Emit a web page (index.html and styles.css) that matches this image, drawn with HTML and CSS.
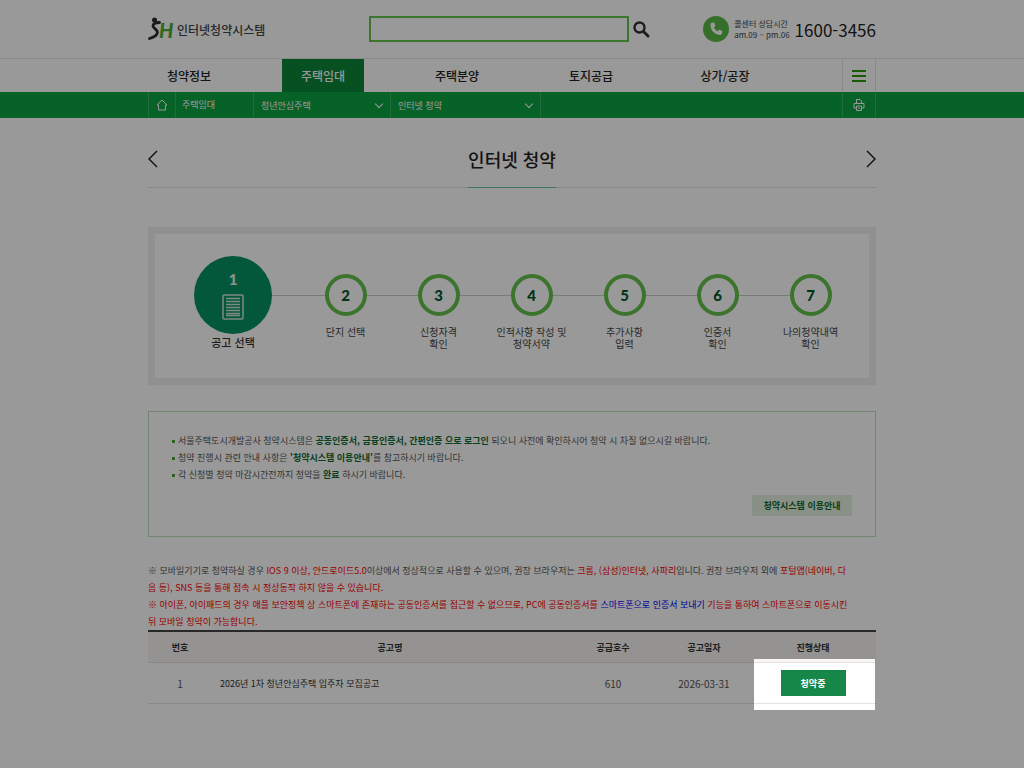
FILE: index.html
```html
<!DOCTYPE html>
<html lang="ko">
<head>
  <meta charset="UTF-8">
  <meta name="viewport" content="width=device-width, initial-scale=1.0">
  <title>인터넷 청약 | 인터넷청약시스템</title>
  <link rel="stylesheet" href="styles.css">
</head>
<body>

  <header class="header">
    <div class="container header-inner">
      <a href="#" class="logo">
        <svg class="logo-mark" width="26" height="24" viewBox="0 0 26 24" aria-hidden="true">
          <circle cx="6.500" cy="3" r="2.500" fill="#2c2c2c"/>
          <path d="M11.500 5.500C7 5.500 5 7 5 9C5 11.500 9.600 12 9.400 15.500C9 19 5 20.500 1.500 21.500" fill="none" stroke="#2c2c2c" stroke-width="2.800" stroke-linecap="round"/>
          <text x="11" y="21" class="logo-h">H</text>
        </svg>
        <span class="logo-text">인터넷청약시스템</span>
      </a>
      <form class="search">
        <input type="text" id="search" aria-label="검색어">
        <button type="submit" aria-label="검색">
          <svg width="17" height="17" viewBox="0 0 17 17" aria-hidden="true">
            <circle cx="6.500" cy="6.500" r="5" fill="none" stroke="#333" stroke-width="2.400"/>
            <path d="M10.500 10.500L15 15" stroke="#333" stroke-width="3" stroke-linecap="round"/>
          </svg>
        </button>
      </form>
      <div class="call">
        <svg width="26" height="26" viewBox="0 0 26 26" aria-hidden="true">
          <circle cx="13" cy="13" r="13" fill="#5bb947"/>
          <path d="M8.600 6.800L10.500 6.400Q11.100 6.400 11.400 7L12.300 9.300Q12.500 9.900 12 10.400L10.900 11.400Q12 14 14.600 15.300L15.800 14Q16.300 13.500 16.900 13.800L18.900 14.900Q19.500 15.300 19.300 15.900L18.800 17.700Q18.500 18.800 17.400 18.900Q13.500 19.200 10.300 15.900Q7.200 12.500 7.500 8Q7.600 7 8.600 6.800Z" fill="#fff"/>
        </svg>
        <p class="call-time">콜센터 상담시간<br>am.09 ~ pm.06</p>
        <strong class="call-number">1600-3456</strong>
      </div>
    </div>
  </header>

  <nav class="gnb">
    <div class="container gnb-inner">
      <ul class="gnb-list">
        <li><a href="#">청약정보</a></li>
        <li><a href="#" class="active">주택임대</a></li>
        <li><a href="#">주택분양</a></li>
        <li><a href="#">토지공급</a></li>
        <li><a href="#">상가/공장</a></li>
      </ul>
      <button type="button" class="menu-btn" aria-label="전체메뉴">
        <span></span><span></span><span></span>
      </button>
    </div>
  </nav>

  <div class="lnb">
    <div class="container lnb-inner">
      <a href="#" class="lnb-home" aria-label="홈">
        <svg width="12" height="12" viewBox="0 0 12 12" fill="none" stroke="#fff" aria-hidden="true">
          <path d="M1 6L6 1L11 6H9.500V11H2.500V6Z"/>
        </svg>
      </a>
      <span class="lnb-text">주택임대</span>
      <div class="lnb-select second">
        <select aria-label="주택 유형">
          <option>청년안심주택</option>
        </select>
      </div>
      <div class="lnb-select third">
        <select aria-label="메뉴">
          <option>인터넷 청약</option>
        </select>
      </div>
      <button type="button" class="print-btn" aria-label="인쇄">
        <svg width="12" height="12" viewBox="0 0 12 12" fill="none" stroke="#fff" aria-hidden="true">
          <path d="M3.500 4.500V.5H7L8.500 2V4.500M3 9H1V4.500H11V9H9M3.500 7H8.500V11.500H3.500ZM5 9.200H7"/>
        </svg>
      </button>
    </div>
  </div>

  <main class="container">
    <div class="page-title">
      <a href="#" class="page-arrow" aria-label="이전">
        <svg width="10" height="18" viewBox="0 0 10 18" fill="none" stroke="#222" stroke-width="1.500"><path d="M9 1L1 9L9 17"/></svg>
      </a>
      <h1>인터넷 청약</h1>
      <a href="#" class="page-arrow" aria-label="다음">
        <svg width="10" height="18" viewBox="0 0 10 18" fill="none" stroke="#222" stroke-width="1.500"><path d="M1 1L9 9L1 17"/></svg>
      </a>
    </div>

    <ol class="steps">
      <li class="current">
        <div class="step-line">
          <div class="step-circle">
            <span>1</span>
            <svg width="22" height="26" viewBox="0 0 22 26" fill="none" stroke="#cfe6d6" aria-hidden="true">
              <rect x="1" y="1" width="20" height="24" rx="1" stroke-width="1.500"/>
              <path d="M4 4.500H18M4 7.500H18M4 10.500H18M4 13.500H18M4 16.500H18M4 19.500H18M4 21.500H18" stroke-width="1.300"/>
            </svg>
          </div>
        </div>
        <p>공고 선택</p>
      </li>
      <li>
        <div class="step-line"><div class="step-circle">2</div></div>
        <p>단지 선택</p>
      </li>
      <li>
        <div class="step-line"><div class="step-circle">3</div></div>
        <p>신청자격<br>확인</p>
      </li>
      <li>
        <div class="step-line"><div class="step-circle">4</div></div>
        <p>인적사항 작성 및<br>청약서약</p>
      </li>
      <li>
        <div class="step-line"><div class="step-circle">5</div></div>
        <p>추가사항<br>입력</p>
      </li>
      <li>
        <div class="step-line"><div class="step-circle">6</div></div>
        <p>인증서<br>확인</p>
      </li>
      <li>
        <div class="step-line"><div class="step-circle">7</div></div>
        <p>나의청약내역<br>확인</p>
      </li>
    </ol>

    <section class="notice">
      <ul>
        <li>서울주택도시개발공사 청약시스템은 <strong>공동인증서, 금융인증서, 간편인증 으로 로그인</strong> 되오니 사전에 확인하시어 청약 시 차질 없으시길 바랍니다.</li>
        <li>청약 진행시 관련 안내 사항은 <strong>'청약시스템 이용안내'</strong>를 참고하시기 바랍니다.</li>
        <li>각 신청별 청약 마감시간전까지 청약을 <strong>완료</strong> 하시기 바랍니다.</li>
      </ul>
      <a href="#" class="guide-btn">청약시스템 이용안내</a>
    </section>

    <div class="mobile-info">
      <p>※ 모바일기기로 청약하실 경우 <span class="red">IOS 9 이상, 안드로이드5.0</span>이상에서 정상적으로 사용할 수 있으며, 권장 브라우저는 <span class="red">크롬, (삼성)인터넷, 사파리</span>입니다. 권장 브라우저 외에 <span class="red">포털앱(네이버, 다<br>음 등), SNS 등을 통해 접속 시 정상동작 하지 않을 수 있습니다.</span></p>
      <p class="red">※ 아이폰, 아이패드의 경우 애플 보안정책 상 스마트폰에 존재하는 공동인증서를 접근할 수 없으므로, PC에 공동인증서를 <a href="#">스마트폰으로 인증서 보내기</a> 기능을 통하여 스마트폰으로 이동시킨<br>뒤 모바일 청약이 가능합니다.</p>
    </div>

    <table class="list">
      <thead>
        <tr>
          <th class="col-no">번호</th>
          <th>공고명</th>
          <th class="col-count">공급호수</th>
          <th class="col-date">공고일자</th>
          <th class="col-state">진행상태</th>
        </tr>
      </thead>
      <tbody>
        <tr>
          <td>1</td>
          <td class="subject"><a href="#">2026년 1차 청년안심주택 입주자 모집공고</a></td>
          <td>610</td>
          <td>2026-03-31</td>
          <td class="state">
            <button type="button" class="apply-btn">청약중</button>
            <!-- dims everything outside this cell -->
            <div class="spotlight"></div>
          </td>
        </tr>
      </tbody>
    </table>
  </main>

</body>
</html>
```
FILE: styles.css
```css
* {
  box-sizing: border-box;
}

body {
  min-height: 100vh;
  margin: 0;
  background: #fff;
  color: #555;
  font-family: "Noto Sans CJK KR", sans-serif;
  font-size: 9px;
  line-height: 17px;
}

ul, ol, p, h1 {
  margin: 0;
  padding: 0;
  list-style: none;
}

a {
  color: inherit;
  text-decoration: none;
}

button, input, select {
  font-family: inherit;
  padding: 0;
  border: 0;
  background: none;
}

button {
  cursor: pointer;
}

svg {
  display: block;
}

.container {
  max-width: 728px;
  margin: 0 auto;
}

/* header */
.header {
  border-bottom: 1px solid #e3e3e3;
}

.header-inner {
  display: flex;
  align-items: center;
  height: 58px;
}

.logo {
  display: flex;
  align-items: center;
  gap: 3px;
  flex: 0 0 221px;
}

.logo-h {
  fill: #4fae35;
  font-family: Lato, sans-serif;
  font-size: 20px;
  font-weight: 900;
  font-style: italic;
}

.logo-text {
  color: #444;
  font-size: 12px;
  font-weight: 500;
}

.search {
  display: flex;
  align-items: center;
  gap: 4px;
}

.search input {
  width: 260px;
  height: 26px;
  padding: 0 8px;
  border: 2px solid #64c44b;
}

.call {
  display: flex;
  align-items: center;
  gap: 5px;
  margin-left: auto;
}

.call-time {
  color: #444;
  font-size: 8px;
  line-height: 11px;
}

.call-number {
  color: #222;
  font-size: 17px;
  font-weight: 400;
}

/* main menu */
.gnb-inner {
  display: flex;
  justify-content: space-between;
}

.gnb-list {
  display: flex;
  gap: 52px;
}

.gnb-list a {
  display: block;
  width: 82px;
  color: #222;
  font-size: 12px;
  font-weight: 500;
  line-height: 33px;
  text-align: center;
}

.gnb-list .active {
  background: #0a8537;
  color: #fff;
}

.menu-btn {
  display: flex;
  flex-direction: column;
  align-items: center;
  justify-content: center;
  gap: 3px;
  width: 34px;
  border: 1px solid #e3e3e3;
  border-width: 0 1px;
}

.menu-btn span {
  width: 14px;
  height: 2px;
  background: #2b9608;
}

/* location bar */
.lnb {
  background: #0da343;
  color: #fff;
}

.lnb-inner {
  display: flex;
  height: 26px;
  line-height: 26px;
}

.lnb-home, .print-btn {
  display: flex;
  align-items: center;
  justify-content: center;
  width: 28px;
  border: 1px solid #3db569;
  border-width: 0 1px;
}

.print-btn {
  width: 34px;
  margin-left: auto;
}

.lnb-text {
  width: 78px;
  padding-left: 6px;
  border-right: 1px solid #3db569;
}

.lnb-select {
  position: relative;
  border-right: 1px solid #3db569;
}

.lnb-select.second {
  width: 137px;
}

.lnb-select.third {
  width: 150px;
}

.lnb-select select {
  appearance: none;
  width: 100%;
  height: 26px;
  padding-left: 7px;
  color: #fff;
  font-size: 9px;
}

.lnb-select::after {
  content: "";
  position: absolute;
  top: 9px;
  right: 8px;
  width: 5px;
  height: 5px;
  border: solid #fff;
  border-width: 0 1px 1px 0;
  transform: rotate(45deg);
}

/* page title */
.page-title {
  display: flex;
  justify-content: space-between;
  height: 70px;
  border-bottom: 1px solid #e3e3e3;
}

.page-title h1 {
  height: 70px;
  padding-top: 28px;
  border-bottom: 1px solid #6cc796;
  color: #222;
  font-size: 18px;
  font-weight: 500;
  line-height: 26px;
}

.page-arrow {
  padding-top: 32px;
}

/* application steps */
.steps {
  display: grid;
  grid-template-columns: 132px repeat(6, 1fr);
  margin-top: 39px;
  padding: 22px 12px 28px;
  border: 7px solid #f0f0f0;
}

.steps li {
  padding-top: 18px;
  text-align: center;
}

.steps .current {
  padding-top: 0;
}

.step-line {
  display: flex;
  align-items: center;
}

.step-line::before,
.step-line::after {
  content: "";
  flex: 1;
  height: 1px;
  background: #ccc;
}

.steps li:first-child .step-line::before,
.steps li:last-child .step-line::after {
  background: none;
}

.step-circle {
  display: flex;
  flex-direction: column;
  align-items: center;
  justify-content: center;
  width: 42px;
  height: 42px;
  border: 4px solid #64c04b;
  border-radius: 50%;
  color: #00582b;
  font-family: Lato, sans-serif;
  font-size: 15px;
  font-weight: 900;
}

.current .step-circle {
  gap: 6px;
  width: 78px;
  height: 78px;
  border: 0;
  background: #059364;
  color: #e8f5ec;
}

.steps p {
  margin-top: 10px;
  color: #444;
  font-size: 10px;
  line-height: 12px;
}

.steps .current p {
  margin-top: 0;
  color: #333;
  font-size: 11px;
  font-weight: 500;
  line-height: 16px;
}

/* notice */
.notice {
  display: flex;
  flex-direction: column;
  margin-top: 26px;
  padding: 20px 23px;
  border: 1px solid #c0dfbd;
}

.notice li {
  display: flow-root;
  padding-left: 6px;
}

.notice li::before {
  content: "";
  float: left;
  width: 3px;
  height: 3px;
  margin: 8px 0 0 -6px;
  background: #46a52f;
}

.notice strong {
  color: #12692f;
}

.guide-btn {
  align-self: flex-end;
  width: 100px;
  margin-top: 12px;
  background: #e4f1e0;
  color: #12692f;
  font-weight: 700;
  line-height: 21px;
  text-align: center;
}

.mobile-info {
  margin-top: 25px;
}

.red {
  color: #f00;
}

.mobile-info a {
  color: #00f;
}

/* list */
.list {
  width: 100%;
  border-collapse: separate;
  border-spacing: 0;
  border-top: 2px solid #444;
  table-layout: fixed;
}

.list th {
  height: 31px;
  padding: 0;
  border-bottom: 1px solid #e3e3e3;
  background: #f7f6f3;
  color: #333;
  font-weight: 700;
}

.list td {
  height: 41px;
  padding: 0;
  border-bottom: 1px solid #e3e3e3;
  font-size: 10px;
  text-align: center;
}

.list .subject {
  padding-left: 8px;
  color: #333;
  font-size: 9px;
  text-align: left;
}

.col-no {
  width: 64px;
}

.col-count {
  width: 90px;
}

.col-date {
  width: 92px;
}

.col-state {
  width: 126px;
}

.list .state {
  position: relative;
}

.apply-btn {
  width: 65px;
  height: 26px;
  background: #168649;
  color: #fff;
  font-size: 9px;
  font-weight: 700;
}

.spotlight {
  position: absolute;
  top: -4px;
  right: 1px;
  bottom: -7px;
  left: 4px;
  box-shadow: 0 0 0 9999px rgba(0, 0, 0, 0.4);
  pointer-events: none;
}
```
